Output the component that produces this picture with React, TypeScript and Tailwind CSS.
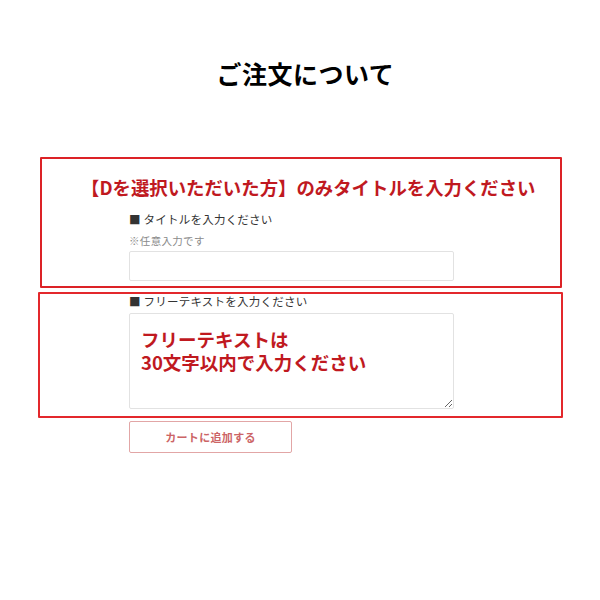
import React from "react";

const jp = "font-['Noto_Sans_CJK_JP','Noto_Sans',sans-serif]";

export default function App() {
  return (
    <div className={`w-[600px] h-[600px] bg-white ${jp} text-[#222]`}>
      <div className="pt-[55px] flex justify-center pl-[11px]">
        <h1 className="text-[25px] font-bold leading-[36px] text-black tracking-[0.02em]">ご注文について</h1>
      </div>

      <div className="ml-[40px] mt-[66px] w-[522px] h-[131px] border-2 border-[#dc2226] rounded-[1px]">
        <div className="pt-[14px] pl-[39px] text-[18.4px] leading-[28px] font-bold text-[#c0191f] whitespace-nowrap">
          【Dを選択いただいた方】のみタイトルを入力ください
        </div>
        <div className="ml-[87px] mt-[9px] flex flex-col">
          <div className="text-[11.5px] leading-[18px] text-[#333] tracking-[0.02em]">■ タイトルを入力ください</div>
          <div className="mt-[5px] text-[10.5px] leading-[16px] text-[#8a8a8a] tracking-[0.03em]">※任意入力です</div>
          <div className="mt-[2px] w-[325px] h-[30px] border border-[#e2e2e2] rounded-[2px] bg-white"></div>
        </div>
      </div>

      <div className="ml-[38px] mt-[4px] w-[525px] h-[126px] border-2 border-[#e3282c] rounded-[1px]">
        <div className="ml-[89px] flex flex-col">
          <div className="text-[11.5px] leading-[14px] text-[#333] tracking-[0.02em]">■ フリーテキストを入力ください</div>
          <textarea
            readOnly
            defaultValue={"フリーテキストは\n30文字以内で入力ください"}
            className={`mt-[5px] w-[325px] h-[96px] border border-[#e2e2e2] rounded-[2px] bg-white pl-[11px] pt-[14px] text-[18.5px] leading-[23px] font-bold text-[#c0191f] outline-none ${jp}`}
          />
        </div>
      </div>

      <div className="ml-[129px] mt-[3px] w-[163px] h-[32px] border border-[#e2a6a6] rounded-[2px] flex items-center justify-center">
        <span className="text-[11px] font-bold text-[#cc6466] tracking-[0.03em]">カートに追加する</span>
      </div>
    </div>
  );
}
